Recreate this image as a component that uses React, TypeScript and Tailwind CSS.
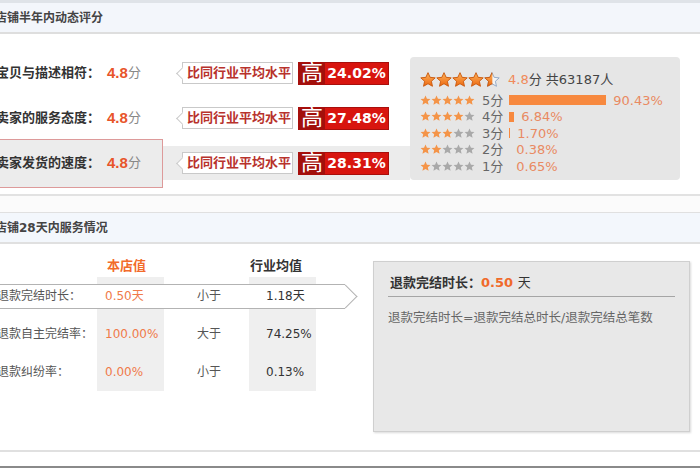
const STAR = "M12 1l3.2 7 7.6.8-5.7 5.1 1.6 7.5L12 17.6l-6.7 3.8 1.6-7.5L1.2 8.8l7.6-.8z";

function BigStar({ half }: { half?: boolean }) {
  return (
    <svg width="16" height="16" viewBox="0 0 24 24">
      <defs>
        <linearGradient id="bigStarFill" x1="0" y1="0" x2="0" y2="1">
          <stop offset="0" stopColor="#ffb55c" />
          <stop offset="1" stopColor="#ec6710" />
        </linearGradient>
        <clipPath id="halfStar">
          <rect x="0" y="0" width="12.5" height="24" />
        </clipPath>
      </defs>
      {half ? (
        <>
          <path d={STAR} fill="#f4f4f4" stroke="#8fa6c4" strokeWidth="1.4" />
          <path d={STAR} fill="url(#bigStarFill)" stroke="#c9580d" strokeWidth="1.4" clipPath="url(#halfStar)" />
        </>
      ) : (
        <path d={STAR} fill="url(#bigStarFill)" stroke="#c9580d" strokeWidth="1.4" />
      )}
    </svg>
  )
}

function SmallStars({ count }: { count: number }) {
  return (
    <div className="flex">
      {[0, 1, 2, 3, 4].map((i) => (
        <svg key={i} width="11" height="11" viewBox="0 0 24 24">
          <path d={STAR} fill={i < count ? "#f49448" : "#a9a9a9"} />
        </svg>
      ))}
    </div>
  )
}

interface ScoreRowProps {
  label: string
  pct: string
  active?: boolean
}

function ScoreRow({ label, pct, active }: ScoreRowProps) {
  return (
    <div className={active ? "flex items-center h-[34px] bg-[#ececec]" : "flex items-center h-[34px]"}>
      <div
        className={
          active
            ? "ml-[-1px] w-[164px] h-[49px] shrink-0 flex items-center border border-[#dd9a9a] bg-[#ececec]"
            : "ml-[-1px] w-[164px] h-[49px] shrink-0 flex items-center border border-transparent"
        }
      >
        <span className="ml-[-4px] text-[13px] font-bold text-[#333] whitespace-nowrap">{label}</span>
        <span className="ml-[7px] text-[15px] font-bold text-[#e8542a] font-['Liberation_Sans',sans-serif]">4.8</span>
        <span className="text-[13px] text-[#888]">分</span>
      </div>
      <div className="relative ml-[19px] h-[22px] flex items-center border border-[#c9c9c9] bg-white pl-[4px] pr-[1px] text-[13px] font-bold text-[#b8322c] whitespace-nowrap">
        <div className="absolute left-[-5px] top-[5.5px] w-[9px] h-[9px] rotate-45 bg-white border-l border-b border-[#c9c9c9]"></div>
        <span className="relative">比同行业平均水平</span>
      </div>
      <div className="ml-[5px] h-[23px] flex border border-[#a80f0c]">
        <span className="w-[26px] bg-[#a3100c] text-white text-[22px] leading-none flex items-center justify-center">高</span>
        <span className="w-[63px] bg-[#d8150f] text-white font-bold text-[14px] flex items-center justify-center">{pct}</span>
      </div>
    </div>
  )
}

const dist = [
  { n: 5, w: "w-[97px]", pct: "90.43%" },
  { n: 4, w: "w-[5px]", pct: "6.84%" },
  { n: 3, w: "w-[1px]", pct: "1.70%" },
  { n: 2, w: "w-0", pct: "0.38%" },
  { n: 1, w: "w-0", pct: "0.65%" },
]

interface ServiceRowProps {
  label: string
  mine: string
  cmp: string
  avg: string
  boxed?: boolean
}

function ServiceRow({ label, mine, cmp, avg, boxed }: ServiceRowProps) {
  const inner = boxed
    ? "relative h-[25px] w-full flex items-center bg-white border-y border-[#b3b3b3]"
    : "h-[25px] w-full flex items-center"
  return (
    <div className="flex h-[38px] text-[12px]">
      <div className="w-[97px] flex items-center">
        <div className={inner}>
          <span className="ml-[-3px] text-[#555] whitespace-nowrap">{label}</span>
        </div>
      </div>
      <div className="w-[67px] bg-[#efefef] flex items-center">
        <div className={inner}>
          <span className="pl-[8px] text-[#f07a4a] whitespace-nowrap">{mine}</span>
        </div>
      </div>
      <div className="w-[85px] flex items-center">
        <div className={inner}>
          <span className="pl-[33px] text-[#555]">{cmp}</span>
        </div>
      </div>
      <div className="w-[67px] bg-[#efefef] flex items-center">
        <div className={inner}>
          <span className="pl-[17px] text-[#333] whitespace-nowrap">{avg}</span>
        </div>
      </div>
      {boxed && (
        <div className="w-[29px] flex items-center">
          <div className={inner}>
            <div className="absolute right-[-8.5px] top-[3px] w-[17px] h-[17px] rotate-45 bg-white border-t border-r border-[#b3b3b3]"></div>
          </div>
        </div>
      )}
    </div>
  )
}

export default function App() {
  return (
    <div className="w-[700px] h-[470px] overflow-hidden bg-white font-['DejaVu_Sans','Noto_Sans_CJK_SC',sans-serif]">
      <div className="h-[3px] bg-[#dfe3e8]"></div>
      <div className="h-[31px] bg-[#f3f6fb] border-b-2 border-[#dedede] flex items-center">
        <span className="ml-[-5px] text-[12px] font-bold text-[#444]">店铺半年内动态评分</span>
      </div>

      <div className="flex h-[160px]">
        <div className="w-[410px] pt-[22px] flex flex-col gap-[11px]">
          <ScoreRow label="宝贝与描述相符：" pct="24.02%" />
          <ScoreRow label="卖家的服务态度：" pct="27.48%" />
          <ScoreRow label="卖家发货的速度：" pct="28.31%" active />
        </div>
        <div className="mt-[23px] w-[270px] h-[123px] rounded-[4px] bg-[#e6e6e6] pl-[10px] pt-[14px]">
          <div className="flex items-center h-[18px]">
            <BigStar />
            <BigStar />
            <BigStar />
            <BigStar />
            <BigStar half />
            <span className="ml-[8px] text-[13px] text-[#f08a5a]">4.8</span>
            <span className="text-[13px] text-[#444] whitespace-nowrap">分 共63187人</span>
          </div>
          <div className="mt-[3px]">
            {dist.map((d) => (
              <div key={d.n} className="flex items-center h-[16.5px] text-[13px] whitespace-nowrap">
                <SmallStars count={d.n} />
                <span className="ml-[7px] text-[#666]">{d.n}分</span>
                <div className={`ml-[6px] h-[10px] bg-[#f7893f] ${d.w}`}></div>
                <span className="ml-[7px] text-[#e98a62]">{d.pct}</span>
              </div>
            ))}
          </div>
        </div>
      </div>
      <div className="h-[2px] bg-[#e2e2e2]"></div>
      <div className="h-[16px] bg-[#fbfbfb]"></div>

      <div className="h-[32px] bg-[#f3f7fc] border-t border-b-2 border-[#e0e0e0] flex items-center">
        <span className="ml-[-5px] text-[12px] font-bold text-[#444]">店铺28天内服务情况</span>
      </div>

      <div className="flex h-[206px]">
        <div className="w-[360px] pt-[11px]">
          <div className="flex h-[22px] items-center text-[13px] font-bold">
            <div className="w-[97px]"></div>
            <div className="w-[67px] pl-[10px] text-[#f26b2b]">本店值</div>
            <div className="w-[85px]"></div>
            <div className="w-[67px] pl-[1px] text-[#333]">行业均值</div>
          </div>
          <ServiceRow label="退款完结时长：" mine="0.50天" cmp="小于" avg="1.18天" boxed />
          <ServiceRow label="退款自主完结率：" mine="100.00%" cmp="大于" avg="74.25%" />
          <ServiceRow label="退款纠纷率：" mine="0.00%" cmp="小于" avg="0.13%" />
        </div>
        <div className="ml-[13px] mt-[17px] w-[317px] h-[171px] bg-[#e8e8e8] border border-[#cfcfcf] shadow-[1px_1px_2px_rgba(0,0,0,0.15)] px-[14px] pt-[12px]">
          <div className="pl-[2px] pb-[4px] border-b border-[#a5a5a5] text-[13px] font-bold text-[#333] leading-[18px]">
            退款完结时长：<span className="text-[#f06a2a]">0.50</span> <span className="font-normal">天</span>
          </div>
          <div className="mt-[12px] text-[12.5px] text-[#666] leading-[18px] whitespace-nowrap">退款完结时长=退款完结总时长/退款完结总笔数</div>
        </div>
      </div>
      <div className="h-[2px] bg-[#e0e0e0]"></div>
      <div className="h-[14px] bg-white"></div>
      <div className="h-[2px] bg-[#8a8a8a]"></div>
    </div>
  )
}
